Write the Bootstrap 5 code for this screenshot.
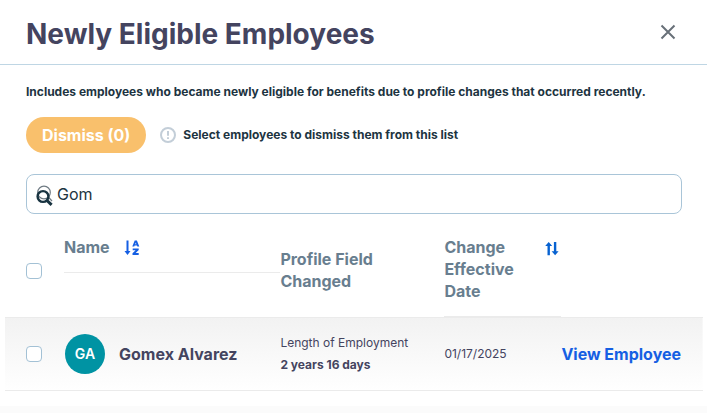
<!DOCTYPE html>
<html lang="en">
<head>
<meta charset="utf-8">
<meta name="viewport" content="width=device-width, initial-scale=1">
<title>Newly Eligible Employees</title>
<link href="https://cdn.jsdelivr.net/npm/bootstrap@5.3.0/dist/css/bootstrap.min.css" rel="stylesheet">
<style>
  body { font-family: Inter, "Liberation Sans", sans-serif; font-size: 16px; line-height: 22px; color: #44445f; background: #fff; }
  .page-head { padding: 14px 25px 10px 26px; border-bottom: 1px solid #bfd6e4; }
  .page-title { font-size: 28px; line-height: 40px; font-weight: 700; color: #44445f; }
  .close-btn { width: 28px; height: 36px; padding: 0 0 4px; color: #687078; }
  .page-main { padding: 16px 25px 0 26px; }
  .note { font-size: 12px; line-height: 22px; font-weight: 700; color: #1d3441; }
  .toolbar { padding: 14px 0 21px; }
  .dismiss-btn { height: 36px; padding: 0 16px; font-size: 16px; line-height: 22px; font-weight: 700; border: 0; margin-right: 14px; }
  .dismiss-btn:disabled { color: #fff; background: #f9c06c; opacity: 1; }
  .info-icon { margin-right: 7px; }
  .search-input { height: 40px; padding: 0 12px 0 30px; font-size: 16px; color: #1d3441; border: 1px solid #a9c5d8; border-radius: 8px; }
  .search-icon { left: 8px; top: 10px; }
  .people-wrap { padding: 11px 4px 15px 5px; }
  .people { table-layout: fixed; width: 100%; }
  .people th, .people td { padding: 0; }
  .people thead th { height: 92px; font-weight: 700; color: #687e8f; vertical-align: middle; }
  .col-tick { width: 59px; }
  .col-name { width: 31%; }
  .col-field { width: 164px; }
  .col-date { width: 117px; }
  .people tbody tr { background: linear-gradient(#f2f2f2, #fff); }
  .people tbody td { height: 73px; border-top: 1px solid #ebebeb; border-bottom: 1px solid #ebebeb; }
  .name-head { gap: 14px; height: 48px; padding-top: 11px; border-bottom: 1px solid #ebebeb; }
  .date-head { height: 92px; padding-top: 11px; border-bottom: 1px solid #ebebeb; }
  .people thead .top-cell { vertical-align: top; }
  .people thead .field-cell { padding-bottom: 3px; }
  .sort-btn { line-height: 0; }
  .people .form-check-input { width: 16px; height: 16px; margin: 0 0 0 21px; border: 1px solid #a3c1d5; border-radius: 4px; }
  .person-cell { gap: 14px; padding-left: 1px; }
  .avatar { width: 40px; height: 40px; font-size: 14px; font-weight: 600; color: #fff; background: #0093a3; }
  .person { font-weight: 700; }
  .detail { font-size: 12px; }
  .view-link { font-weight: 700; color: #155fe3; }
  .page-foot { height: 7px; background: #fbfbfb; }
</style>
<script src="https://cdn.jsdelivr.net/npm/bootstrap@5.3.0/dist/js/bootstrap.bundle.min.js"></script>
</head>
<body>
<header class="page-head d-flex align-items-center justify-content-between">
  <h1 class="page-title mb-0">Newly Eligible Employees</h1>
  <button type="button" class="close-btn btn border-0 d-flex align-items-center justify-content-center" aria-label="Close">
    <svg width="16" height="16" viewBox="0 0 16 16" fill="none" stroke="currentColor" stroke-width="2"><path d="M1.500 1.500l13 13M14.500 1.500l-13 13"/></svg>
  </button>
</header>
<main>
  <div class="page-main">
    <p class="note mb-0">Includes employees who became newly eligible for benefits due to profile changes that occurred recently.</p>
    <div class="toolbar d-flex align-items-center">
      <button type="button" class="dismiss-btn btn rounded-pill" disabled>Dismiss (0)</button>
      <svg class="info-icon flex-shrink-0" width="16" height="16" viewBox="0 0 16 16" fill="none" stroke="#c3ced8"><circle cx="8" cy="8" r="7" stroke-width="2"/><path d="M8 4v4.800M8 10.200v1.800" stroke-width="2"/></svg>
      <span class="note">Select employees to dismiss them from this list</span>
    </div>
    <div class="position-relative">
      <input type="text" class="search-input form-control" aria-label="Search employees" value="Gom">
      <svg class="search-icon position-absolute" width="20" height="22" viewBox="0 0 20 22" fill="none"><circle cx="10" cy="8.500" r="6.300" stroke="#707b84" stroke-width="1.200"/><path d="M14.300 13l3.700 4" stroke="#707b84" stroke-width="1.200"/><circle cx="9" cy="12.500" r="5.400" stroke="#183340" stroke-width="2.400"/><path d="M12.800 16.300l4.800 4.500" stroke="#183340" stroke-width="3"/></svg>
    </div>
  </div>
  <div class="people-wrap">
    <table class="people">
      <colgroup><col class="col-tick"><col class="col-name"><col class="col-field"><col class="col-date"><col></colgroup>
      <thead>
        <tr>
          <th><input type="checkbox" class="form-check-input d-block" aria-label="Select all employees"></th>
          <th class="top-cell"><div class="name-head d-flex align-items-start">Name
            <button type="button" class="sort-btn btn p-0 border-0 mt-1" aria-label="Sort by name">
              <svg width="16" height="16" viewBox="0 0 16 16" fill="#155fe3"><path d="M2.500 0.500h2v10.400h2L3.500 14.900.5 10.900h2z"/><path fill-rule="evenodd" d="M10.700 0.500h2.200l2.400 6h-2l-.3-.9h-2.400l-.3.9h-2zM11.800 2.600l-.6 1.600h1.200zM8.700 8.400h6v1.700l-3 3h3v1.800h-6.200v-1.700l3.100-3h-2.900z"/></svg>
            </button></div></th>
          <th class="field-cell">Profile Field<br>Changed</th>
          <th class="top-cell"><div class="date-head d-flex align-items-start justify-content-between"><span>Change<br>Effective<br>Date</span>
            <button type="button" class="sort-btn btn p-0 border-0 mt-1" aria-label="Sort by change effective date">
              <svg width="16" height="16" viewBox="0 0 16 16" fill="#0762d1"><path d="M3.700 2L7.200 5.900H4.900v9.300H2.500V5.900H.2zM8.900 2h2.400v9.300h2.300L10.100 15.200l-3.500-3.900h2.300z"/></svg>
            </button></div></th>
          <th aria-label="Actions"></th>
        </tr>
      </thead>
      <tbody>
        <tr>
          <td><input type="checkbox" class="form-check-input d-block" aria-label="Select Gomex Alvarez"></td>
          <td><div class="person-cell d-flex align-items-center"><span class="avatar rounded-circle d-flex align-items-center justify-content-center">GA</span><span class="person">Gomex Alvarez</span></div></td>
          <td class="detail">Length of Employment<br><strong>2 years 16 days</strong></td>
          <td class="detail">01/17/2025</td>
          <td><a href="#" class="view-link text-decoration-none text-nowrap">View Employee</a></td>
        </tr>
      </tbody>
    </table>
  </div>
</main>
<footer class="page-foot"></footer>
</body>
</html>
